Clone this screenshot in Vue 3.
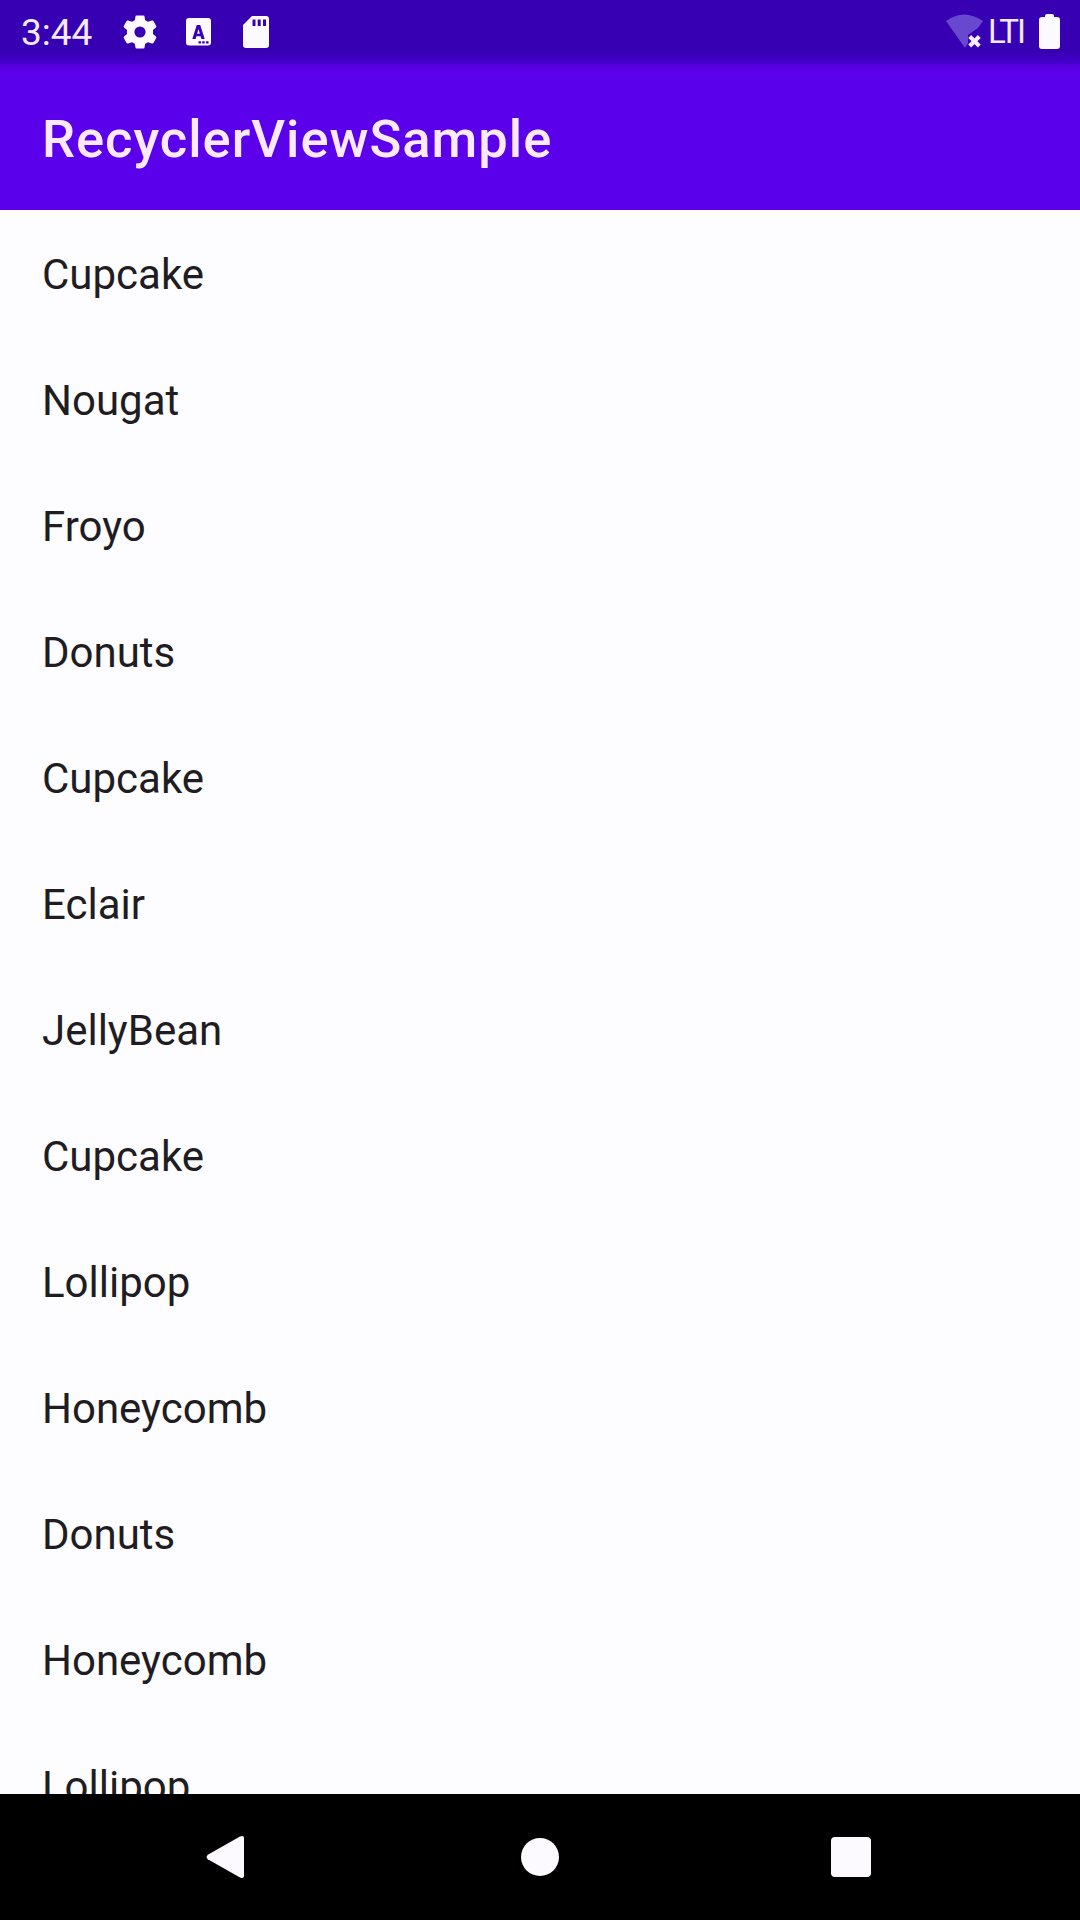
<script setup>
const items = [
  'Cupcake', 'Nougat', 'Froyo', 'Donuts', 'Cupcake', 'Eclair', 'JellyBean',
  'Cupcake', 'Lollipop', 'Honeycomb', 'Donuts', 'Honeycomb', 'Lollipop',
]
</script>

<template>
  <div class="screen">
    <header class="status">
      <span class="clock">3:44</span>
      <svg class="gear" width="34" height="34" viewBox="0 0 34 34">
        <path fill-rule="evenodd" d="M12.5 1.5Q12.5 .5 13.5 .5H20.5Q21.5 .5 21.5 1.5L22.2 5.2L25 6.8L29 5.6Q30 5.4 30.6 6.2L33.2 11Q33.6 12 32.9 12.6L30 15V19L32.9 21.5Q33.6 22 33.2 23L30.6 27.8Q30 28.6 29 28.4L25 27.2L22.2 28.8L21.5 32.5Q21.5 33.5 20.5 33.5H13.5Q12.5 33.5 12.5 32.5L11.8 28.8L9 27.2L5 28.4Q4 28.6 3.4 27.8L.8 23Q.4 22 1.1 21.5L4 19V15L1.1 12.6Q.4 12 .8 11L3.4 6.2Q4 5.4 5 5.6L9 6.8L11.8 5.2ZM17 11.4A5.6 5.6 0 1 0 17 22.6A5.6 5.6 0 1 0 17 11.4Z" />
      </svg>
      <svg class="keyboard" width="26" height="28" viewBox="0 0 26 28">
        <rect width="25" height="27.5" rx="3" />
        <path class="ink" fill-rule="evenodd" d="M10.8 7H14.2L18.7 21H15.4L14.6 18.3H10.4L9.6 21H6.3ZM12.5 11L11.2 15.7H13.8ZM12.5 23.2H15V25.4H12.5ZM16.2 23.2H18.7V25.4H16.2ZM20 23.2H22.5V25.4H20Z" />
      </svg>
      <svg class="card" width="27" height="34" viewBox="0 0 27 34">
        <path d="M9 1H23Q26 1 26 4V30Q26 33 23 33H3Q0 33 0 30V10Z" />
        <path class="ink" d="M9.5 4.5H12.5V11H9.5ZM14.7 4.5H17.7V11H14.7ZM20 4.5H23V11H20Z" />
      </svg>
      <svg class="wifi" width="38" height="36" viewBox="0 0 38 36">
        <path class="faint" d="M0 7Q18-6 37 7L32 14L22 21V29L19 34Z" />
        <path class="cross" d="M23.7 22.5L33.3 32M33.3 22.5L23.7 32" />
      </svg>
      <span class="network">LTI</span>
      <svg class="battery" width="21" height="35" viewBox="0 0 21 35">
        <path d="M6 3V2Q6 0 8 0H13Q15 0 15 2V3H18Q21 3 21 6V32Q21 35 18 35H3Q0 35 0 32V6Q0 3 3 3Z" />
      </svg>
    </header>
    <div class="toolbar"><h1>RecyclerViewSample</h1></div>
    <ul class="list">
      <li v-for="(item, i) in items" :key="i">{{ item }}</li>
    </ul>
    <nav class="nav">
      <svg class="back" width="38" height="42" viewBox="0 0 38 42">
        <path d="M34 .5Q38-1 38 2V40Q38 43 34 41.5L1.8 23.3Q-.6 21 1.8 18.7Z" />
      </svg>
      <svg class="home" width="38" height="38" viewBox="0 0 38 38"><circle cx="19" cy="19" r="19" /></svg>
      <svg class="recents" width="40" height="40" viewBox="0 0 40 40"><rect width="40" height="40" rx="4" /></svg>
    </nav>
  </div>
</template>

<style>
body { margin: 0; }
</style>

<style scoped>
.screen {
  width: 1080px;
  height: 1920px;
  display: flex;
  flex-direction: column;
  overflow: hidden;
  background: #fdfcff;
  font-family: Roboto, sans-serif;
}
svg { display: block; flex: none; fill: #fdfaff; }
.status {
  flex: none;
  box-sizing: border-box;
  height: 64px;
  padding: 0 20px 1px 21px;
  display: flex;
  align-items: center;
  background: linear-gradient(#3700b3 52px, #4600ce);
  color: #f4eaff;
}
.clock { width: 102px; font-size: 37px; line-height: 64px; padding-top: 3px; }
.keyboard { margin-left: 29px; }
.card { margin-left: 31px; }
.ink { fill: #3700b3; }
.wifi { margin-left: auto; }
.faint { fill: #6848cf; }
.cross { stroke: #f7edff; stroke-width: 4; }
.network { width: 51px; margin-left: 4px; font-size: 33px; line-height: 60px; letter-spacing: -2px; }
.toolbar {
  flex: none;
  height: 146px;
  padding-left: 42px;
  display: flex;
  align-items: center;
  background: linear-gradient(#5200dc, #5b00eb 9px);
}
h1 {
  margin: 4px 0 0;
  color: #fbeaff;
  font-size: 52.5px;
  line-height: 62px;
  font-weight: 500;
  letter-spacing: 0.98px;
}
.list {
  flex: 1;
  min-height: 0;
  overflow: hidden;
  margin: 0;
  padding: 2px 42px 0;
  list-style: none;
}
.list li {
  height: 126px;
  color: #1f1c22;
  font-size: 42px;
  line-height: 126px;
  letter-spacing: 0;
}
.nav {
  flex: none;
  height: 126px;
  display: flex;
  align-items: center;
  background: #000;
}
.back { margin-left: 206px; }
.home { margin-left: 277px; }
.recents { margin-left: 272px; }
</style>
